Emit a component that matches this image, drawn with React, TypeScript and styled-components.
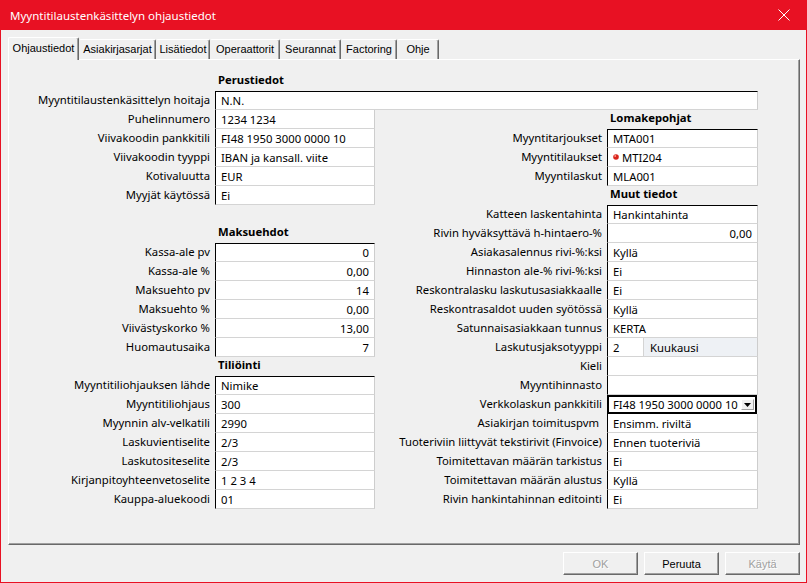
import styled, { createGlobalStyle } from 'styled-components';

const GlobalStyle = createGlobalStyle`
  * { box-sizing: border-box; }
  html, body { margin: 0; padding: 0; }
  body {
    background: #f0f0f0;
    font-family: "Noto Sans", "Liberation Sans", sans-serif;
    font-size: 11.3px;
    color: #000;
  }
`;

const Window = styled.div`
  width: 807px;
  height: 583px;
  display: flex;
  flex-direction: column;
  background: #f0f0f0;
  overflow: hidden;
`;

const TitleBar = styled.div`
  height: 30px;
  flex: none;
  background: #e81123;
  color: #fff;
  display: flex;
  align-items: center;
  justify-content: space-between;
  padding-left: 10px;
  font-size: 11.5px;
`;

const CloseButton = styled.div`
  width: 46px;
  height: 30px;
  display: flex;
  align-items: center;
  justify-content: center;
`;

const Body = styled.div`
  flex: 1;
  display: flex;
  flex-direction: column;
  border: 1px solid #e81123;
  border-top: none;
  padding: 7px 6px 0 7px;
`;

const TabRow = styled.div`
  display: flex;
  align-items: flex-end;
  height: 23px;
  margin-bottom: -1px;
  position: relative;
  z-index: 1;
`;

const Tab = styled.div<{ $w: number; $active?: boolean }>`
  width: ${(p) => p.$w}px;
  height: ${(p) => (p.$active ? 23 : 20)}px;
  margin-bottom: ${(p) => (p.$active ? 0 : 1)}px;
  background: #f0f0f0;
  border-top: 1px solid #fff;
  border-left: 1px solid ${(p) => (p.$active ? '#fff' : '#f0f0f0')};
  border-right: 1px solid #696969;
  box-shadow: inset -1px 0 0 #a0a0a0;
  border-radius: 2px 2px 0 0;
  font-family: "Liberation Sans", Arial, sans-serif;
  font-size: 11px;
  padding-top: ${(p) => (p.$active ? 4 : 3)}px;
  text-align: center;
  white-space: nowrap;
`;

const Panel = styled.div`
  width: 792px;
  height: 486px;
  border-top: 1px solid #fff;
  border-left: 1px solid #fff;
  border-right: 1px solid #696969;
  border-bottom: 1px solid #696969;
  box-shadow: inset -1px -1px 0 #a0a0a0;
  padding-top: 12px;
`;

const Sheet = styled.div`
  display: flex;
  flex-direction: column;
`;

const Columns = styled.div`
  display: flex;
`;

const Column = styled.div`
  display: flex;
  flex-direction: column;
`;

const Row = styled.div`
  display: flex;
  height: 19px;
`;

const Label = styled.div<{ $w: number }>`
  width: ${(p) => p.$w}px;
  flex: none;
  padding-right: 5px;
  text-align: right;
  line-height: 18px;
  white-space: nowrap;
`;

const Heading = styled.div<{ $offset: number }>`
  height: 19px;
  padding-left: ${(p) => p.$offset + 3}px;
  font-weight: bold;
  line-height: 16px;
  white-space: nowrap;
`;

const Cell = styled.div<{ $w: number; $first?: boolean; $right?: boolean }>`
  width: ${(p) => p.$w}px;
  height: 19px;
  flex: none;
  background: #fff;
  border-left: 1px solid #000;
  border-right: 1px solid #cdcdcd;
  border-bottom: 1px solid #d4d4d4;
  border-top: ${(p) => (p.$first ? '1px solid #000' : 'none')};
  padding: 0 5px;
  display: flex;
  align-items: center;
  justify-content: ${(p) => (p.$right ? 'flex-end' : 'flex-start')};
  white-space: nowrap;
`;

const SplitCell = styled(Cell)`
  padding: 0;
`;

const SplitPart = styled.div<{ $w?: number; $shaded?: boolean }>`
  height: 100%;
  display: flex;
  align-items: center;
  padding-left: ${(p) => (p.$shaded ? 6 : 5)}px;
  ${(p) => (p.$w ? `width: ${p.$w}px; flex: none;` : 'flex: 1;')}
  background: ${(p) => (p.$shaded ? '#eef1f5' : '#fff')};
  border-right: ${(p) => (p.$shaded ? 'none' : '1px solid #d4d4d4')};
`;

const Combo = styled.div<{ $w: number }>`
  width: ${(p) => p.$w}px;
  height: 19px;
  flex: none;
  background: #fff;
  border: 2px solid #000;
  display: flex;
  align-items: center;
  justify-content: space-between;
  padding: 0 1px 0 4px;
  white-space: nowrap;
`;

const DropButton = styled.div`
  width: 13px;
  height: 11px;
  background: #f0f0f0;
  border-top: 1px solid #fff;
  border-left: 1px solid #fff;
  border-right: 1px solid #a0a0a0;
  border-bottom: 1px solid #a0a0a0;
  display: flex;
  align-items: center;
  justify-content: center;
`;

const Dot = styled.svg`
  margin-right: 3px;
  flex: none;
`;

const Footer = styled.div`
  display: flex;
  justify-content: flex-end;
  gap: 6px;
  margin-top: 7px;
`;

const Button = styled.div<{ $disabled?: boolean }>`
  width: 75px;
  height: 23px;
  background: #f0f0f0;
  border-top: 1px solid #fff;
  border-left: 1px solid #fff;
  border-right: 1px solid #696969;
  border-bottom: 1px solid #696969;
  box-shadow: inset -1px -1px 0 #a0a0a0;
  display: flex;
  align-items: center;
  justify-content: center;
  font-family: "Liberation Sans", Arial, sans-serif;
  font-size: 11px;
  color: ${(p) => (p.$disabled ? '#a0a0a0' : '#000')};
  text-shadow: ${(p) => (p.$disabled ? '1px 1px 0 #fff' : 'none')};
`;

type Item =
  | { kind: 'head'; text: string }
  | { kind: 'gap' }
  | {
      kind: 'field';
      label: string;
      value?: string;
      right?: boolean;
      first?: boolean;
      dot?: boolean;
      split?: [string, string];
      combo?: boolean;
    };

const tabs = [
  { text: 'Ohjaustiedot', w: 71, active: true },
  { text: 'Asiakirjasarjat', w: 77 },
  { text: 'Lisätiedot', w: 54 },
  { text: 'Operaattorit', w: 70 },
  { text: 'Seurannat', w: 61 },
  { text: 'Factoring', w: 56 },
  { text: 'Ohje', w: 42 },
];

const leftItems: Item[] = [
  { kind: 'field', label: 'Puhelinnumero', value: '1234 1234' },
  { kind: 'field', label: 'Viivakoodin pankkitili', value: 'FI48 1950 3000 0000 10' },
  { kind: 'field', label: 'Viivakoodin tyyppi', value: 'IBAN ja kansall. viite' },
  { kind: 'field', label: 'Kotivaluutta', value: 'EUR' },
  { kind: 'field', label: 'Myyjät käytössä', value: 'Ei' },
  { kind: 'gap' },
  { kind: 'head', text: 'Maksuehdot' },
  { kind: 'field', label: 'Kassa-ale pv', value: '0', right: true, first: true },
  { kind: 'field', label: 'Kassa-ale %', value: '0,00', right: true },
  { kind: 'field', label: 'Maksuehto pv', value: '14', right: true },
  { kind: 'field', label: 'Maksuehto %', value: '0,00', right: true },
  { kind: 'field', label: 'Viivästyskorko %', value: '13,00', right: true },
  { kind: 'field', label: 'Huomautusaika', value: '7', right: true },
  { kind: 'head', text: 'Tiliöinti' },
  { kind: 'field', label: 'Myyntitiliohjauksen lähde', value: 'Nimike', first: true },
  { kind: 'field', label: 'Myyntitiliohjaus', value: '300' },
  { kind: 'field', label: 'Myynnin alv-velkatili', value: '2990' },
  { kind: 'field', label: 'Laskuvientiselite', value: '2/3' },
  { kind: 'field', label: 'Laskutositeselite', value: '2/3' },
  { kind: 'field', label: 'Kirjanpitoyhteenvetoselite', value: '1 2 3 4' },
  { kind: 'field', label: 'Kauppa-aluekoodi', value: '01' },
];

const rightItems: Item[] = [
  { kind: 'head', text: 'Lomakepohjat' },
  { kind: 'field', label: 'Myyntitarjoukset', value: 'MTA001', first: true },
  { kind: 'field', label: 'Myyntitilaukset', value: 'MTI204', dot: true },
  { kind: 'field', label: 'Myyntilaskut', value: 'MLA001' },
  { kind: 'head', text: 'Muut tiedot' },
  { kind: 'field', label: 'Katteen laskentahinta', value: 'Hankintahinta', first: true },
  { kind: 'field', label: 'Rivin hyväksyttävä h-hintaero-%', value: '0,00', right: true },
  { kind: 'field', label: 'Asiakasalennus rivi-%:ksi', value: 'Kyllä' },
  { kind: 'field', label: 'Hinnaston ale-% rivi-%:ksi', value: 'Ei' },
  { kind: 'field', label: 'Reskontralasku laskutusasiakkaalle', value: 'Ei' },
  { kind: 'field', label: 'Reskontrasaldot uuden syötössä', value: 'Kyllä' },
  { kind: 'field', label: 'Satunnaisasiakkaan tunnus', value: 'KERTA' },
  { kind: 'field', label: 'Laskutusjaksotyyppi', split: ['2', 'Kuukausi'] },
  { kind: 'field', label: 'Kieli', value: '' },
  { kind: 'field', label: 'Myyntihinnasto', value: '' },
  { kind: 'field', label: 'Verkkolaskun pankkitili', value: 'FI48 1950 3000 0000 10', combo: true },
  { kind: 'field', label: 'Asiakirjan toimituspvm\u00a0', value: 'Ensimm. riviltä' },
  { kind: 'field', label: 'Tuoteriviin liittyvät tekstirivit (Finvoice)', value: 'Ennen tuoteriviä' },
  { kind: 'field', label: 'Toimitettavan määrän tarkistus', value: 'Ei' },
  { kind: 'field', label: 'Toimitettavan määrän alustus', value: 'Kyllä' },
  { kind: 'field', label: 'Rivin hankintahinnan editointi', value: 'Ei' },
];

const RedDot = () => (
  <Dot width="6" height="6" viewBox="0 0 6 6">
    <circle cx="3" cy="3" r="2.8" fill="#d8241c" />
    <circle cx="2.2" cy="2" r="0.9" fill="#ff9c8c" />
  </Dot>
);

const FieldColumn = ({ items, labelW, fieldW }: { items: Item[]; labelW: number; fieldW: number }) => (
  <Column>
    {items.map((it, i) => {
      if (it.kind === 'gap') return <Row key={i} />;
      if (it.kind === 'head')
        return (
          <Heading key={i} $offset={labelW}>
            {it.text}
          </Heading>
        );
      let field;
      if (it.combo) {
        field = (
          <Combo $w={fieldW - 1}>
            {it.value}
            <DropButton>
              <svg width="7" height="4" viewBox="0 0 7 4">
                <path d="M0 0h7L3.5 4z" fill="#000" />
              </svg>
            </DropButton>
          </Combo>
        );
      } else if (it.split) {
        field = (
          <SplitCell $w={fieldW}>
            <SplitPart $w={36}>{it.split[0]}</SplitPart>
            <SplitPart $shaded>{it.split[1]}</SplitPart>
          </SplitCell>
        );
      } else {
        field = (
          <Cell $w={fieldW} $first={it.first} $right={it.right}>
            {it.dot && <RedDot />}
            {it.value}
          </Cell>
        );
      }
      return (
        <Row key={i}>
          <Label $w={labelW}>{it.label}</Label>
          {field}
        </Row>
      );
    })}
  </Column>
);

export default function App() {
  return (
    <>
      <GlobalStyle />
      <Window>
        <TitleBar>
          Myyntitilaustenkäsittelyn ohjaustiedot
          <CloseButton>
            <svg width="12" height="12" viewBox="0 0 12 12">
              <path d="M0.5 0.5l11 11M11.5 0.5l-11 11" stroke="#fff" strokeWidth="1" />
            </svg>
          </CloseButton>
        </TitleBar>
        <Body>
          <TabRow>
            {tabs.map((t) => (
              <Tab key={t.text} $w={t.w} $active={t.active}>
                {t.text}
              </Tab>
            ))}
          </TabRow>
          <Panel>
            <Sheet>
              <Heading $offset={206}>Perustiedot</Heading>
              <Row>
                <Label $w={206}>Myyntitilaustenkäsittelyn hoitaja</Label>
                <Cell $w={543} $first>
                  N.N.
                </Cell>
              </Row>
              <Columns>
                <FieldColumn items={leftItems} labelW={206} fieldW={160} />
                <FieldColumn items={rightItems} labelW={232} fieldW={151} />
              </Columns>
            </Sheet>
          </Panel>
          <Footer>
            <Button $disabled>OK</Button>
            <Button>Peruuta</Button>
            <Button $disabled>Käytä</Button>
          </Footer>
        </Body>
      </Window>
    </>
  );
}
